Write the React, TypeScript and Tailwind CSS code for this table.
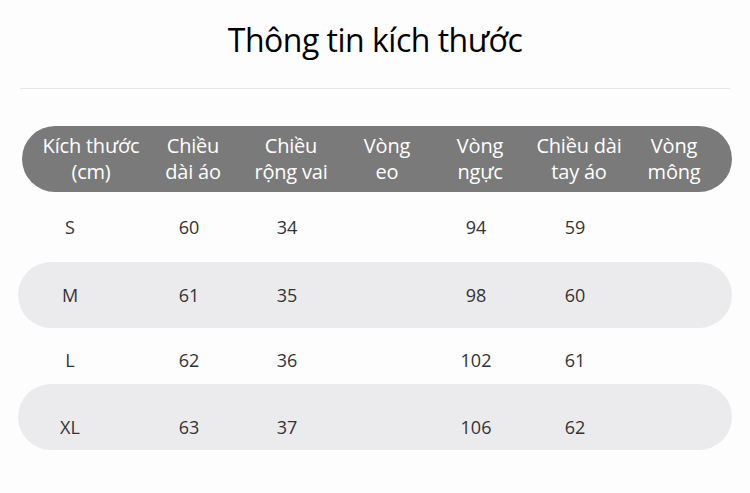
export default function App() {
  const cols = ['w-[102px]', 'w-[102px]', 'w-[94px]', 'w-[98px]', 'w-[88px]', 'w-[110px]', 'w-[80px]']
  const headers = [
    ['Kích thước', '(cm)'],
    ['Chiều', 'dài áo'],
    ['Chiều', 'rộng vai'],
    ['Vòng', 'eo'],
    ['Vòng', 'ngực'],
    ['Chiều dài', 'tay áo'],
    ['Vòng', 'mông'],
  ]
  const rows = [
    { size: 'S', vals: ['60', '34', '', '94', '59', ''], bg: false, h: 'h-[70px]', pad: 'pt-0' },
    { size: 'M', vals: ['61', '35', '', '98', '60', ''], bg: true, h: 'h-[66px]', pad: 'pt-0' },
    { size: 'L', vals: ['62', '36', '', '102', '61', ''], bg: false, h: 'h-[56px]', pad: 'pt-[8px]' },
    { size: 'XL', vals: ['63', '37', '', '106', '62', ''], bg: true, h: 'h-[66px]', pad: 'pt-[20px]' },
  ]

  return (
    <div className="h-[493px] w-[750px] bg-[#fdfdfd] font-['Open_Sans',sans-serif]">
      <h1 className="pt-[18px] text-center text-[32px] leading-[44px] tracking-[-0.5px] text-black">
        Thông tin kích thước
      </h1>
      <div className="mx-[20px] mt-[26px] h-px bg-[#e6e6e6]" />
      <div className="ml-[22px] mr-[18px] mt-[37px] flex h-[66px] items-center rounded-full bg-[#7a7a7a] pl-[18px] text-white">
        {headers.map((h, i) => (
          <div key={i} className={`${cols[i]} text-center text-[20px] leading-[26px] tracking-[-0.2px]`}>
            <div>{h[0]}</div>
            <div>{h[1]}</div>
          </div>
        ))}
      </div>
      {rows.map((r) => (
        <div
          key={r.size}
          className={`mx-[18px] flex ${r.h} items-center ${r.pad} pl-[22px] text-[18px] text-[#333] ${r.bg ? 'rounded-full bg-[#ebebed]' : ''}`}
        >
          <div className={`${cols[0]}`}>
            <div className="w-[60px] text-center">{r.size}</div>
          </div>
          {r.vals.map((v, i) => (
            <div key={i} className={`${cols[i + 1]} pr-[8px] text-center`}>
              {v}
            </div>
          ))}
        </div>
      ))}
    </div>
  )
}
